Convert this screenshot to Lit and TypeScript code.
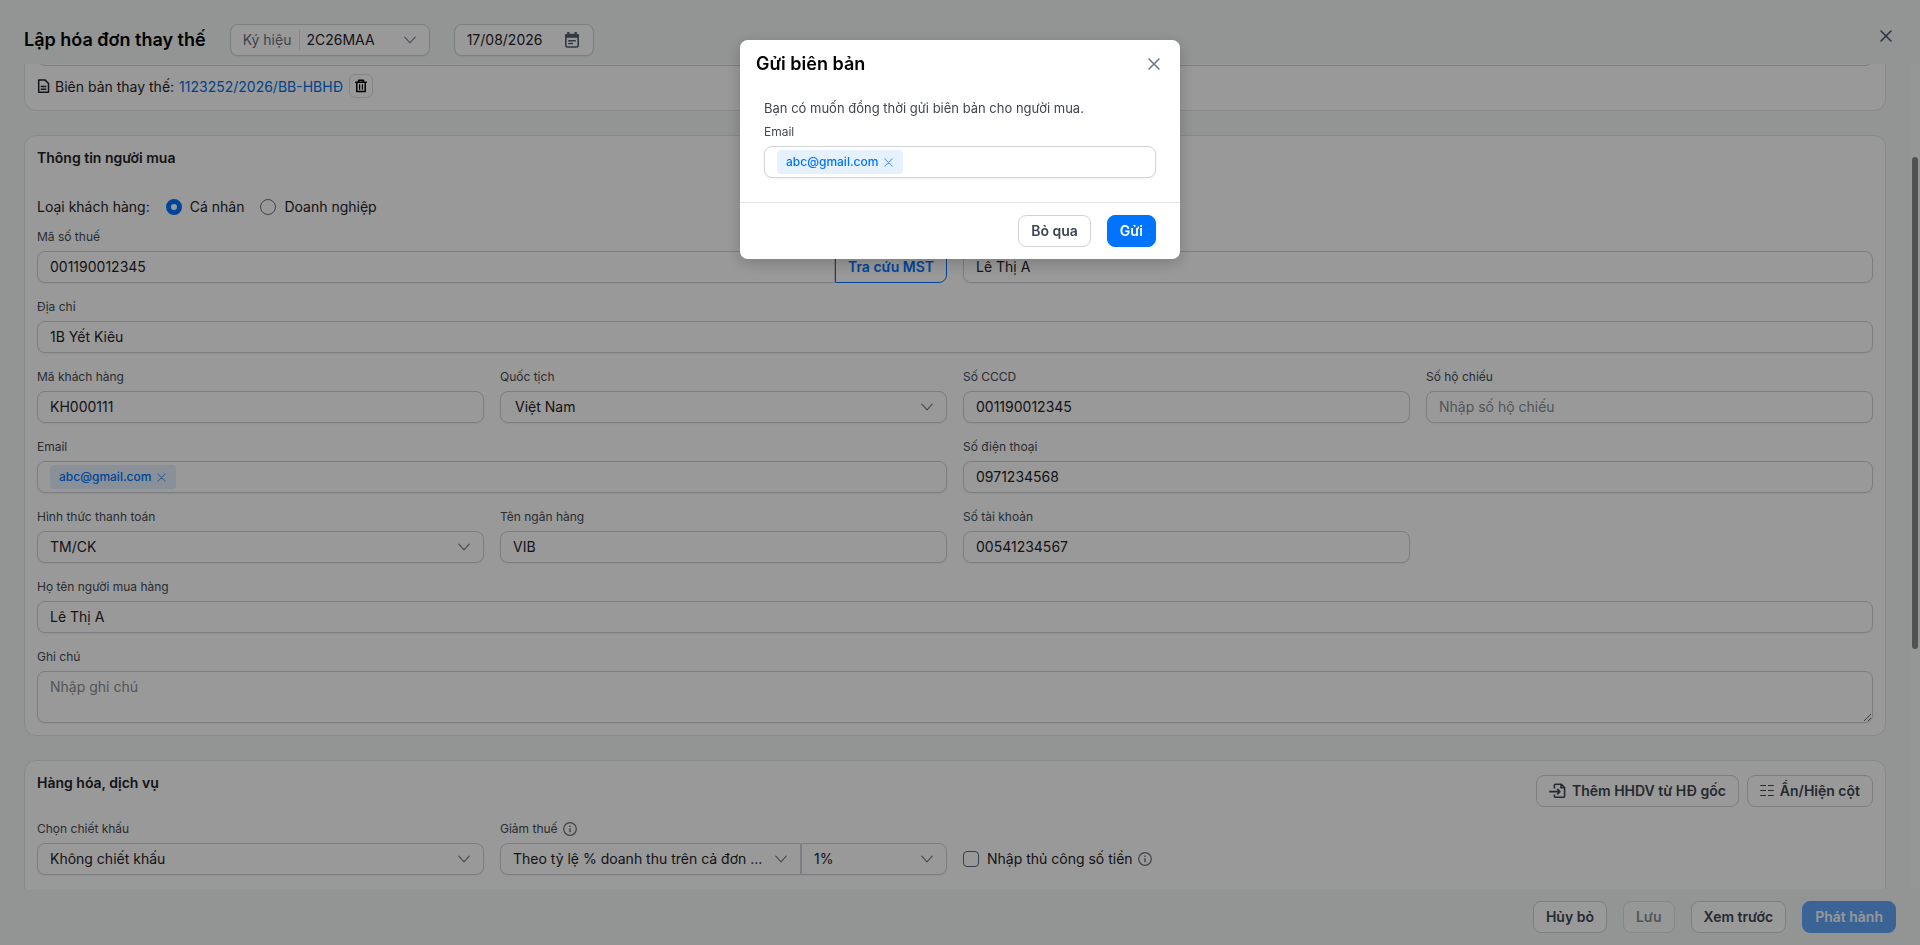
import { LitElement, html, css, svg } from "lit";
import { customElement, state } from "lit/decorators.js";

const chevron = html`<svg class="chevron" width="12" height="12" viewBox="0 0 12 12" fill="none" stroke="currentColor" stroke-width="1.2" stroke-linecap="round" stroke-linejoin="round" aria-hidden="true"><path d="M0.8 3.2L6 8.8l5.2-5.6" /></svg>`;

const cross = (size: number, weight: number) => html`<svg width=${size} height=${size} viewBox="0 0 12 12" fill="none" stroke="currentColor" stroke-width=${weight} stroke-linecap="round" aria-hidden="true">${svg`<path d="M1 1l10 10M11 1L1 11" />`}</svg>`;

const info = html`<svg class="info" width="14" height="14" viewBox="0 0 14 14" fill="none" stroke="currentColor" aria-hidden="true"><circle cx="7" cy="7" r="6.3" stroke-width="1.2" /><path d="M7 6.2v4" stroke-width="1.4" /><path d="M7 3.6v1.4" stroke-width="1.4" /></svg>`;

@customElement("app-root")
export class AppRoot extends LitElement {
  static styles = css`
    :host {
      display: flex;
      flex-direction: column;
      height: 100vh;
      background: #f4f8f6;
      color: #1f2329;
      font: 14px/20px Inter, sans-serif;
    }
    *, *::before, *::after { box-sizing: border-box; }
    h1, h2, p { margin: 0; }
    h1 { font-size: 18px; line-height: 24px; font-weight: 600; color: #000; }
    h2 { font-size: 14px; line-height: 20px; font-weight: 600; }
    svg { display: block; flex: none; }
    button, input, select, textarea { font: inherit; color: inherit; margin: 0; }

    .topbar {
      flex: none;
      display: flex;
      align-items: flex-start;
      gap: 24px;
      padding: 24px 24px 8px;
    }
    .topbar h1 { padding: 4px 0; }
    .spacer { flex: 1; }
    .icon-btn {
      display: grid;
      place-items: center;
      width: 24px;
      height: 24px;
      padding: 0;
      border: 0;
      background: none;
      color: #4a5a6c;
      cursor: pointer;
    }
    .page-close { margin-right: -2px; }

    .box {
      display: flex;
      align-items: center;
      height: 32px;
      border: 1px solid #d0d3d8;
      border-radius: 8px;
      background: #fff;
      box-shadow: 0 1px 2px rgba(16, 24, 40, 0.05);
    }
    .serial { width: 200px; }
    .serial label { padding: 0 8px 0 12px; color: #6b7280; }
    .serial .select { flex: 1; border-left: 1px solid #d8dadf; }
    .serial .control { height: 20px; border: 0; padding: 0 30px 0 6px; box-shadow: none; }
    .date { width: 140px; padding: 0 13px 0 12px; gap: 8px; }
    .date input { flex: 1; min-width: 0; border: 0; padding: 0; background: none; outline: none; }
    .date svg { color: #56606f; }

    .viewport { flex: 1; min-height: 0; display: flex; }
    .scroller {
      flex: 1;
      min-width: 0;
      overflow-y: auto;
      scrollbar-width: none;
      display: flex;
      flex-direction: column;
      gap: 24px;
      padding: 0 24px;
    }
    .track { flex: none; width: 10px; padding: 0 2px; border-radius: 5px; background: #fafafa; }
    .thumb { border-radius: 3px; background: #888; }

    .card {
      flex: none;
      padding: 12px;
      border: 1px solid #e2e7e5;
      border-radius: 12px;
      background: #fff;
    }
    .notice { height: 145px; border: 1px solid #d0d3d8; border-radius: 8px; }
    .minutes { display: flex; align-items: center; height: 24px; margin-top: 8px; }
    .minutes > svg { margin-right: 5px; }
    .minutes > span, .minutes > a { padding-top: 2px; }
    .minutes a { color: #0070e8; text-decoration: none; margin: 0 6px 0 5px; }
    .trash {
      width: 24px;
      height: 24px;
      padding: 0;
      display: grid;
      place-items: center;
      border: 1px solid #dcdfe3;
      border-radius: 6px;
      background: #fff;
      color: #000;
    }

    .kinds { display: flex; align-items: center; height: 30px; margin: 24px 0 5px; }
    .kinds label { display: flex; align-items: center; gap: 8px; margin-left: 16px; }
    .kinds input {
      appearance: none;
      width: 16px;
      height: 16px;
      border: 1px solid #6b7280;
      border-radius: 50%;
      background: #fff;
    }
    .kinds input:checked { border: 5px solid #0073ff; }

    .grid { display: grid; grid-template-columns: repeat(4, minmax(0, 1fr)); gap: 14px 16px; }
    .w2 { grid-column: span 2; }
    .w4 { grid-column: span 4; }
    .label {
      display: flex;
      align-items: center;
      gap: 5px;
      margin-bottom: 4px;
      font-size: 12px;
      line-height: 20px;
      color: #464c55;
    }
    .info { color: #6b7078; }
    .control {
      display: block;
      width: 100%;
      height: 32px;
      padding: 0 12px;
      border: 1px solid #d0d3d8;
      border-radius: 8px;
      background: #fff;
      outline: none;
      box-shadow: 0 1px 2px rgba(16, 24, 40, 0.05);
    }
    input.control { padding-bottom: 1px; }
    .control::placeholder { color: #8a8d93; opacity: 1; }
    textarea.control { height: 52px; padding: 5px 12px; resize: vertical; }
    .select { display: grid; align-items: center; }
    .select > * { grid-area: 1 / 1; }
    .select select { appearance: none; padding-right: 32px; text-overflow: ellipsis; }
    .select .chevron { justify-self: end; margin-right: 14px; color: #768193; pointer-events: none; }
    .serial .chevron { margin-right: 13px; }
    .select .inset { padding-left: 14px; }
    .joined { display: flex; }
    .joined > :first-child { flex: 1; min-width: 0; }
    .joined > :first-child .control, .joined > input.control { border-radius: 8px 0 0 8px; }
    .joined > .rate { width: 146px; }
    .rate .control { border-radius: 0 8px 8px 0; }
    .lookup {
      flex: none;
      width: 112px;
      padding: 0;
      border: 1px solid #0073ff;
      border-radius: 0 8px 8px 0;
      background: #fff;
      color: #0073ff;
      font-weight: 600;
    }

    .tags { padding: 0 12px; }
    .tags input { flex: 1; min-width: 0; border: 0; padding: 0; background: none; outline: none; }
    .tag {
      display: flex;
      align-items: center;
      gap: 6px;
      height: 24px;
      padding: 0 10px 0 9px;
      border-radius: 4px;
      background: #e5f1fd;
      color: #0073ff;
      font-size: 12px;
      font-weight: 500;
    }
    .tag button { padding: 0; border: 0; background: none; color: #5a9ff2; cursor: pointer; }

    .goods { min-height: 530px; }
    .goods-head { display: flex; align-items: flex-start; justify-content: space-between; margin-bottom: 12px; }
    .actions { display: flex; gap: 8px; padding-top: 2px; }
    .btn {
      display: flex;
      align-items: center;
      gap: 6px;
      height: 32px;
      padding: 0 12px;
      border: 1px solid #d0d3d8;
      border-radius: 8px;
      background: #fff;
      color: #3f4650;
      font-weight: 600;
      white-space: nowrap;
      cursor: pointer;
    }
    .primary { border-color: #0073ff; background: #0073ff; color: #fff; }
    .btn:disabled { opacity: 0.6; cursor: default; }
    .manual { display: flex; align-items: center; gap: 8px; height: 32px; margin-top: 24px; }
    .manual input {
      appearance: none;
      width: 16px;
      height: 16px;
      border: 1px solid #5a6b85;
      border-radius: 4px;
      background: #fff;
    }
    .manual .info { margin-left: -3px; }

    .bottombar { flex: none; display: flex; justify-content: flex-end; gap: 16px; padding: 12px 24px; }

    .backdrop {
      position: fixed;
      inset: 0;
      display: flex;
      justify-content: center;
      align-items: flex-start;
      padding: 40px 16px;
      background: rgba(0, 0, 0, 0.4);
    }
    .modal {
      width: 440px;
      border-radius: 8px;
      background: #fff;
      box-shadow: 0 4px 16px rgba(0, 0, 0, 0.2);
    }
    .modal-head { display: flex; align-items: center; justify-content: space-between; padding: 12px 14px 12px 16px; }
    .modal-head .icon-btn { color: #66758a; }
    .modal-body { padding: 10px 24px 24px; }
    .modal-body p { font-size: 13px; line-height: 20px; padding-bottom: 4px; color: #3f4650; }
    .modal-foot { display: flex; justify-content: flex-end; gap: 16px; padding: 12px 24px; border-top: 1px solid #e5e7eb; }
  `;

  @state() private thumbTop = 0;
  @state() private thumbHeight = 0;

  private get scroller() {
    return this.renderRoot.querySelector(".scroller") as HTMLElement;
  }

  private measure = () => {
    const { scrollTop, scrollHeight, clientHeight } = this.scroller;
    const ratio = clientHeight / scrollHeight;
    this.thumbTop = Math.round(scrollTop * ratio);
    this.thumbHeight = Math.round(clientHeight * ratio);
  };

  firstUpdated() {
    this.scroller.scrollTop = 156;
    this.measure();
    window.addEventListener("resize", this.measure);
  }

  disconnectedCallback() {
    super.disconnectedCallback();
    window.removeEventListener("resize", this.measure);
  }

  private text(id: string, label: string, value: string, span = "", placeholder = "") {
    return html`<div class=${span}>
      <label class="label" for=${id}>${label}</label>
      <input class="control" id=${id} .value=${value} placeholder=${placeholder} />
    </div>`;
  }

  private select(id: string, value: string, extra = "") {
    return html`<div class="select">
      <select class="control ${extra}" id=${id}><option>${value}</option></select>
      ${chevron}
    </div>`;
  }

  private tags(id: string) {
    return html`<div class="box tags">
      <span class="tag">abc@gmail.com<button aria-label="Xóa email">${cross(9, 1.4)}</button></span>
      <input id=${id} />
    </div>`;
  }

  render() {
    return html`
      <header class="topbar">
        <h1>Lập hóa đơn thay thế</h1>
        <div class="box serial">
          <label for="serial">Ký hiệu</label>
          ${this.select("serial", "2C26MAA")}
        </div>
        <div class="box date">
          <input aria-label="Ngày hóa đơn" .value=${"17/08/2026"} />
          <svg width="16" height="16" viewBox="0 0 16 16" fill="none" stroke="currentColor" aria-hidden="true">
            <rect x="1.8" y="2.6" width="12.4" height="12.4" rx="1.4" stroke-width="1.6" />
            <path d="M1 2.4h14v3.4H1z" fill="currentColor" stroke="none" />
            <path d="M4.3 0v3M11.7 0v3" stroke-width="2.2" />
            <path d="M4.2 8.7h7.6M4.2 11.6h4.8" stroke-width="1.5" />
          </svg>
        </div>
        <span class="spacer"></span>
        <button class="icon-btn page-close" aria-label="Đóng">${cross(12, 1.6)}</button>
      </header>

      <main class="viewport">
        <div class="scroller" @scroll=${this.measure}>
          <section class="card">
            <div class="notice"></div>
            <div class="minutes">
              <svg width="13" height="16" viewBox="0 0 13 16" fill="none" stroke="currentColor" stroke-width="1.5" aria-hidden="true">
                <path d="M1.7 1.9h6.2l3.6 3.6v8.7H1.7z" stroke-linejoin="round" />
                <path d="M3.7 8.4h5.6M3.7 11.2h5.6" />
              </svg>
              <span>Biên bản thay thế:</span>
              <a href="#">1123252/2026/BB-HBHĐ</a>
              <button class="trash" aria-label="Xóa biên bản">
                <svg width="14" height="14" viewBox="0 0 14 14" fill="none" stroke="currentColor" stroke-width="1.5" aria-hidden="true">
                  <path d="M1.2 3.2h11.6M4.6 3V1.2h4.8V3M2.8 3.4v9.2h8.4V3.4" stroke-linejoin="round" />
                  <path d="M5.6 5.2v5.6M8.4 5.2v5.6" stroke-width="1.2" />
                </svg>
              </button>
            </div>
          </section>

          <section class="card">
            <h2>Thông tin người mua</h2>
            <div class="kinds" role="radiogroup" aria-label="Loại khách hàng">
              <span>Loại khách hàng:</span>
              <label><input type="radio" name="kind" checked />Cá nhân</label>
              <label><input type="radio" name="kind" />Doanh nghiệp</label>
            </div>
            <div class="grid">
              <div class="w2">
                <label class="label" for="tax">Mã số thuế</label>
                <div class="joined">
                  <input class="control" id="tax" .value=${"001190012345"} />
                  <button class="lookup">Tra cứu MST</button>
                </div>
              </div>
              ${this.text("unit", "Tên đơn vị", "Lê Thị A", "w2")}
              ${this.text("address", "Địa chỉ", "1B Yết Kiêu", "w4")}
              ${this.text("code", "Mã khách hàng", "KH000111")}
              <div>
                <label class="label" for="nation">Quốc tịch</label>
                ${this.select("nation", "Việt Nam", "inset")}
              </div>
              ${this.text("cccd", "Số CCCD", "001190012345")}
              ${this.text("passport", "Số hộ chiếu", "", "", "Nhập số hộ chiếu")}
              <div class="w2">
                <label class="label" for="email">Email</label>
                ${this.tags("email")}
              </div>
              ${this.text("phone", "Số điện thoại", "0971234568", "w2")}
              <div>
                <label class="label" for="payment">Hình thức thanh toán</label>
                ${this.select("payment", "TM/CK")}
              </div>
              ${this.text("bank", "Tên ngân hàng", "VIB")}
              ${this.text("account", "Số tài khoản", "00541234567")}
              ${this.text("buyer", "Họ tên người mua hàng", "Lê Thị A", "w4")}
              <div class="w4">
                <label class="label" for="note">Ghi chú</label>
                <textarea class="control" id="note" placeholder="Nhập ghi chú"></textarea>
              </div>
            </div>
          </section>

          <section class="card goods">
            <div class="goods-head">
              <h2>Hàng hóa, dịch vụ</h2>
              <div class="actions">
                <button class="btn">
                  <svg width="17" height="16" viewBox="0 0 17 16" fill="none" stroke="currentColor" stroke-width="1.6" stroke-linejoin="round" aria-hidden="true">
                    <path d="M5.4 5.6V2.3a1 1 0 0 1 1-1h6l3.2 3.2v8.8a1 1 0 0 1-1 1H6.4a1 1 0 0 1-1-1v-1.8M12 1.4v3.4h3.4" />
                    <path d="M0.2 8.6h10.4M8.2 5.9l2.7 2.7-2.7 2.8" />
                  </svg>
                  Thêm HHDV từ HĐ gốc
                </button>
                <button class="btn">
                  <svg width="14" height="14" viewBox="0 0 14 14" fill="none" stroke="currentColor" stroke-width="1.2" aria-hidden="true">
                    <path d="M0.3 1.5h5.7M8 1.5h5.7M0.3 6.5h5.7M8 6.5h5.7M0.3 11.5h5.7M8 11.5h5.7" />
                  </svg>
                  Ẩn/Hiện cột
                </button>
              </div>
            </div>
            <div class="grid">
              <div>
                <label class="label" for="discount">Chọn chiết khấu</label>
                ${this.select("discount", "Không chiết khấu")}
              </div>
              <div>
                <label class="label" for="reduction">Giảm thuế ${info}</label>
                <div class="joined">
                  ${this.select("reduction", "Theo tỷ lệ % doanh thu trên cả đơn ...")}
                  <div class="rate">${this.select("rate", "1%")}</div>
                </div>
              </div>
              <label class="manual w2"><input type="checkbox" />Nhập thủ công số tiền ${info}</label>
            </div>
          </section>
        </div>
        <div class="track" aria-hidden="true">
          <div class="thumb" style="height:${this.thumbHeight}px;transform:translateY(${this.thumbTop}px)"></div>
        </div>
      </main>

      <footer class="bottombar">
        <button class="btn">Hủy bỏ</button>
        <button class="btn" disabled>Lưu</button>
        <button class="btn">Xem trước</button>
        <button class="btn primary" disabled>Phát hành</button>
      </footer>

      <div class="backdrop">
        <div class="modal" role="dialog" aria-modal="true" aria-labelledby="modal-title">
          <div class="modal-head">
            <h1 id="modal-title">Gửi biên bản</h1>
            <button class="icon-btn" aria-label="Đóng">${cross(12, 1.5)}</button>
          </div>
          <div class="modal-body">
            <p>Bạn có muốn đồng thời gửi biên bản cho người mua.</p>
            <label class="label" for="send-email">Email</label>
            ${this.tags("send-email")}
          </div>
          <div class="modal-foot">
            <button class="btn">Bỏ qua</button>
            <button class="btn primary">Gửi</button>
          </div>
        </div>
      </div>
    `;
  }
}
